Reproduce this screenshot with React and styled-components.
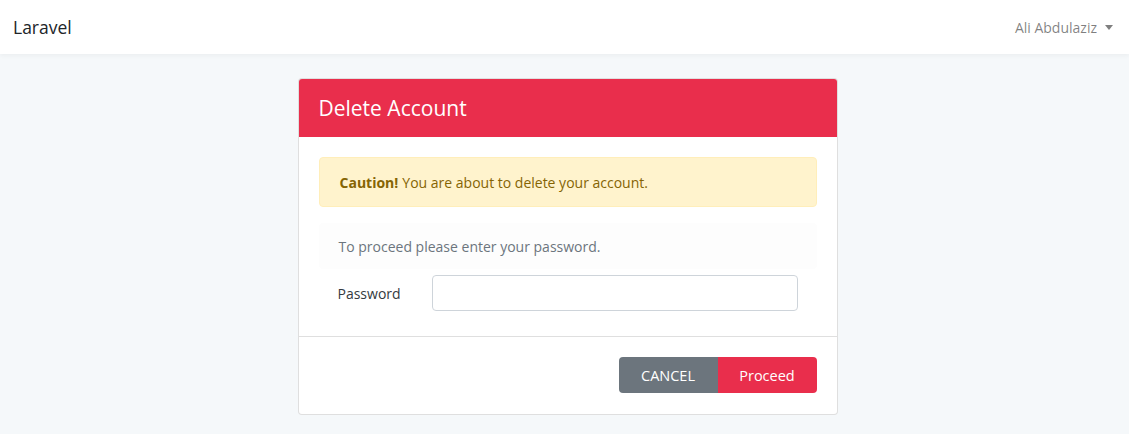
import React from 'react'
import styled, { createGlobalStyle } from 'styled-components'

const GlobalStyle = createGlobalStyle`
  body {
    margin: 0;
    background: #f5f8fa;
    font-family: "Open Sans", Lato, sans-serif;
    font-size: 14px;
    color: #212529;
  }
`

const Navbar = styled.nav`
  height: 54px;
  background: #fff;
  box-shadow: 0 2px 4px rgba(0, 0, 0, 0.04);
  display: flex;
  align-items: center;
  justify-content: space-between;
  padding: 0 16px 0 13px;
`

const Brand = styled.div`
  font-size: 17.5px;
  color: #212529;
`

const UserMenu = styled.div`
  display: flex;
  align-items: center;
  gap: 8px;
  color: rgba(0, 0, 0, 0.5);
  font-size: 14px;
`

const Caret = styled.span`
  width: 0;
  height: 0;
  border-top: 5px solid rgba(0, 0, 0, 0.5);
  border-left: 4.5px solid transparent;
  border-right: 4.5px solid transparent;
`

const Main = styled.main`
  display: flex;
  justify-content: center;
  padding: 24px 0 0 6px;
`

const Card = styled.section`
  width: 538px;
  background: #fff;
  border: 1px solid rgba(0, 0, 0, 0.125);
  border-radius: 4px;
  overflow: hidden;
`

const CardHeader = styled.div`
  background: #e92e4c;
  color: #fff;
  font-size: 21px;
  height: 58px;
  display: flex;
  align-items: center;
  padding: 0 20px;
`

const CardBody = styled.div`
  padding: 20px 20px 25px;
  display: flex;
  flex-direction: column;
`

const Alert = styled.div`
  background: #fff3cd;
  border: 1px solid #ffeeba;
  color: #856404;
  border-radius: 4px;
  height: 48px;
  display: flex;
  align-items: center;
  padding: 0 20px;
  b { font-weight: 700; margin-right: 4px; }
`

const Note = styled.div`
  margin-top: 16px;
  background: #fdfdfd;
  border-radius: 4px;
  height: 46px;
  display: flex;
  align-items: center;
  padding: 0 20px;
  color: #6c757d;
`

const Row = styled.div`
  display: flex;
  align-items: center;
  margin-top: 6px;
  padding: 0 19px;
`

const Label = styled.label`
  width: 94px;
  color: #343a40;
`

const Input = styled.input`
  width: 366px;
  height: 36px;
  box-sizing: border-box;
  border: 1px solid #ced4da;
  border-radius: 4px;
  padding: 6px 12px;
  font: inherit;
`

const CardFooter = styled.div`
  border-top: 1px solid rgba(0, 0, 0, 0.125);
  padding: 20px 20px 21px;
  display: flex;
  justify-content: flex-end;
`

const Button = styled.button`
  height: 36px;
  width: ${p => p.$w}px;
  border: none;
  color: #fff;
  font: inherit;
  font-size: 14.5px;
  background: ${p => p.$bg};
  border-radius: ${p => p.$radius};
  padding: 0;
`

export default function App() {
  return (
    <>
      <GlobalStyle />
      <Navbar>
        <Brand>Laravel</Brand>
        <UserMenu>
          Ali Abdulaziz <Caret />
        </UserMenu>
      </Navbar>
      <Main>
        <Card>
          <CardHeader>Delete Account</CardHeader>
          <CardBody>
            <Alert>
              <b>Caution!</b> You are about to delete your account.
            </Alert>
            <Note>To proceed please enter your password.</Note>
            <Row>
              <Label>Password</Label>
              <Input type="password" />
            </Row>
          </CardBody>
          <CardFooter>
            <Button $w={99} $bg="#6c757d" $radius="4px 0 0 4px">CANCEL</Button>
            <Button $w={99} $bg="#e92e4c" $radius="0 4px 4px 0">Proceed</Button>
          </CardFooter>
        </Card>
      </Main>
    </>
  )
}
